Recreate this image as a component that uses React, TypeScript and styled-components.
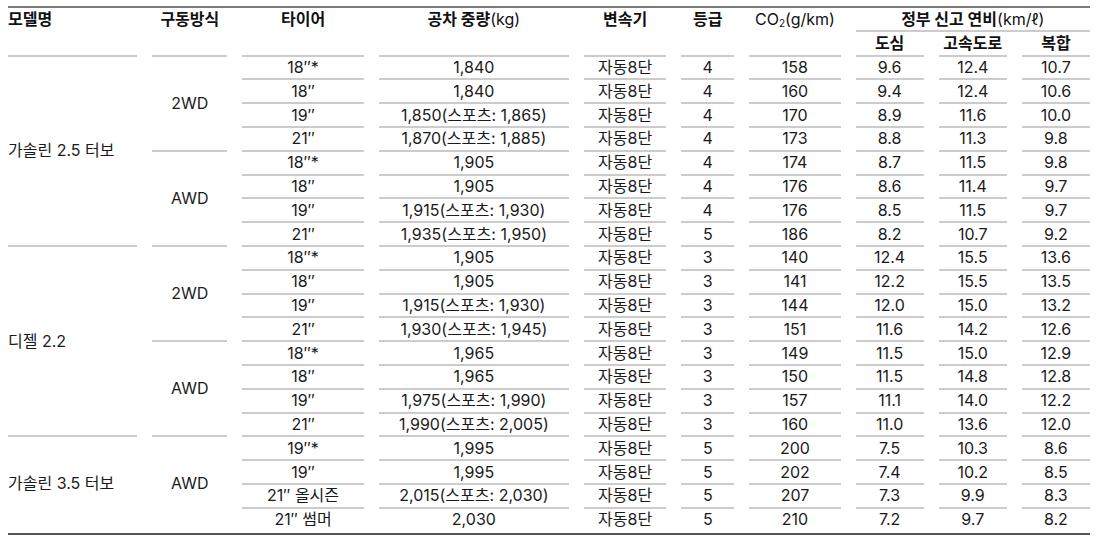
import styled, { createGlobalStyle } from 'styled-components';

interface SpecRow {
    tire: string;
    weight: string;
    grade: string;
    co2: string;
    city: string;
    highway: string;
    combined: string;
}

interface Drive {
    name: string;
    rows: SpecRow[];
}

interface Model {
    name: string;
    drives: Drive[];
}

const row = (tire: string, weight: string, grade: string, co2: string, city: string, highway: string, combined: string): SpecRow => ({
    tire, weight, grade, co2, city, highway, combined
});

const models: Model[] = [
    {
        name: '가솔린 2.5 터보',
        drives: [
            {
                name: '2WD',
                rows: [
                    row('18″*', '1,840', '4', '158', '9.6', '12.4', '10.7'),
                    row('18″', '1,840', '4', '160', '9.4', '12.4', '10.6'),
                    row('19″', '1,850(스포츠: 1,865)', '4', '170', '8.9', '11.6', '10.0'),
                    row('21″', '1,870(스포츠: 1,885)', '4', '173', '8.8', '11.3', '9.8'),
                ]
            },
            {
                name: 'AWD',
                rows: [
                    row('18″*', '1,905', '4', '174', '8.7', '11.5', '9.8'),
                    row('18″', '1,905', '4', '176', '8.6', '11.4', '9.7'),
                    row('19″', '1,915(스포츠: 1,930)', '4', '176', '8.5', '11.5', '9.7'),
                    row('21″', '1,935(스포츠: 1,950)', '5', '186', '8.2', '10.7', '9.2'),
                ]
            }
        ]
    },
    {
        name: '디젤 2.2',
        drives: [
            {
                name: '2WD',
                rows: [
                    row('18″*', '1,905', '3', '140', '12.4', '15.5', '13.6'),
                    row('18″', '1,905', '3', '141', '12.2', '15.5', '13.5'),
                    row('19″', '1,915(스포츠: 1,930)', '3', '144', '12.0', '15.0', '13.2'),
                    row('21″', '1,930(스포츠: 1,945)', '3', '151', '11.6', '14.2', '12.6'),
                ]
            },
            {
                name: 'AWD',
                rows: [
                    row('18″*', '1,965', '3', '149', '11.5', '15.0', '12.9'),
                    row('18″', '1,965', '3', '150', '11.5', '14.8', '12.8'),
                    row('19″', '1,975(스포츠: 1,990)', '3', '157', '11.1', '14.0', '12.2'),
                    row('21″', '1,990(스포츠: 2,005)', '3', '160', '11.0', '13.6', '12.0'),
                ]
            }
        ]
    },
    {
        name: '가솔린 3.5 터보',
        drives: [
            {
                name: 'AWD',
                rows: [
                    row('19″*', '1,995', '5', '200', '7.5', '10.3', '8.6'),
                    row('19″', '1,995', '5', '202', '7.4', '10.2', '8.5'),
                    row('21″ 올시즌', '2,015(스포츠: 2,030)', '5', '207', '7.3', '9.9', '8.3'),
                    row('21″ 썸머', '2,030', '5', '210', '7.2', '9.7', '8.2'),
                ]
            }
        ]
    }
];

const columnWidths = [129, 75, 121, 190, 82, 53, 91, 68, 68, 68];

const App = () => {
    return (
        <>
            <GlobalStyle />
            <TableFrame>
                <SpecTable>
                    <colgroup>
                        {columnWidths.map((w, i) => (
                            <col key={i} style={{ width: w }} />
                        ))}
                    </colgroup>
                    <thead>
                        <tr>
                            <HeadCell rowSpan={2} $align="left">모델명</HeadCell>
                            <HeadCell rowSpan={2}>구동방식</HeadCell>
                            <HeadCell rowSpan={2}>타이어</HeadCell>
                            <HeadCell rowSpan={2}>공차 중량<Unit>(kg)</Unit></HeadCell>
                            <HeadCell rowSpan={2}>변속기</HeadCell>
                            <HeadCell rowSpan={2}>등급</HeadCell>
                            <HeadCell rowSpan={2}><Unit>CO<Sub>2</Sub>(g/km)</Unit></HeadCell>
                            <HeadCell colSpan={3}>정부 신고 연비<Unit>(km/ℓ)</Unit></HeadCell>
                        </tr>
                        <tr>
                            <HeadCell>도심</HeadCell>
                            <HeadCell>고속도로</HeadCell>
                            <HeadCell>복합</HeadCell>
                        </tr>
                    </thead>
                    <tbody>
                        {models.map((model, mi) => {
                            const modelRows = model.drives.reduce((n, d) => n + d.rows.length, 0);
                            const lastModel = mi === models.length - 1;
                            return model.drives.map((drive, di) => {
                                const lastDrive = lastModel && di === model.drives.length - 1;
                                return drive.rows.map((r, ri) => {
                                    const lastRow = lastDrive && ri === drive.rows.length - 1;
                                    return (
                                        <tr key={`${mi}-${di}-${ri}`}>
                                            {di === 0 && ri === 0 && (
                                                <Cell rowSpan={modelRows} $align="left" $last={lastModel}>
                                                    {model.name}
                                                </Cell>
                                            )}
                                            {ri === 0 && (
                                                <Cell rowSpan={drive.rows.length} $last={lastDrive}>
                                                    {drive.name}
                                                </Cell>
                                            )}
                                            <Cell $last={lastRow}>{r.tire}</Cell>
                                            <Cell $last={lastRow}>{r.weight}</Cell>
                                            <Cell $last={lastRow}>자동8단</Cell>
                                            <Cell $last={lastRow}>{r.grade}</Cell>
                                            <Cell $last={lastRow}>{r.co2}</Cell>
                                            <Cell $last={lastRow}>{r.city}</Cell>
                                            <Cell $last={lastRow}>{r.highway}</Cell>
                                            <Cell $last={lastRow}>{r.combined}</Cell>
                                        </tr>
                                    );
                                });
                            });
                        })}
                    </tbody>
                </SpecTable>
            </TableFrame>
        </>
    );
};

const GlobalStyle = createGlobalStyle`
  html, body {
    margin: 0;
    padding: 0;
    background: #ffffff;
  }

  body {
    font-family: Inter, "Noto Sans CJK KR", "Noto Sans", sans-serif;
    color: #1a1a1a;
  }
`;

const TableFrame = styled.div`
  margin: 6px 9px 0 8px;
  border-top: 2px solid #7a7a7a;
  border-bottom: 2px solid #555555;
`;

const SpecTable = styled.table`
  table-layout: fixed;
  border-collapse: separate;
  border-spacing: 15px 0;
  margin: 0 -15px;
  width: calc(100% + 30px);
  font-size: 16px;
`;

const HeadCell = styled.th<{ $align?: 'left' | 'center' }>`
  box-sizing: border-box;
  padding: 0;
  height: 24.3px;
  line-height: 22px;
  vertical-align: top;
  text-align: ${props => props.$align ?? 'center'};
  font-weight: 700;
  color: #111111;
  white-space: nowrap;
  border-bottom: 2px solid #cccccc;
`;

const Unit = styled.span`
  font-weight: 400;
`;

const Sub = styled.span`
  font-size: 10px;
  vertical-align: -2px;
`;

const Cell = styled.td<{ $align?: 'left' | 'center'; $last?: boolean }>`
  box-sizing: border-box;
  padding: 0;
  height: 23.8px;
  line-height: 21px;
  text-align: ${props => props.$align ?? 'center'};
  vertical-align: middle;
  white-space: nowrap;
  border-bottom: 2px solid ${props => props.$last ? 'transparent' : '#cccccc'};
`;

export default App;
